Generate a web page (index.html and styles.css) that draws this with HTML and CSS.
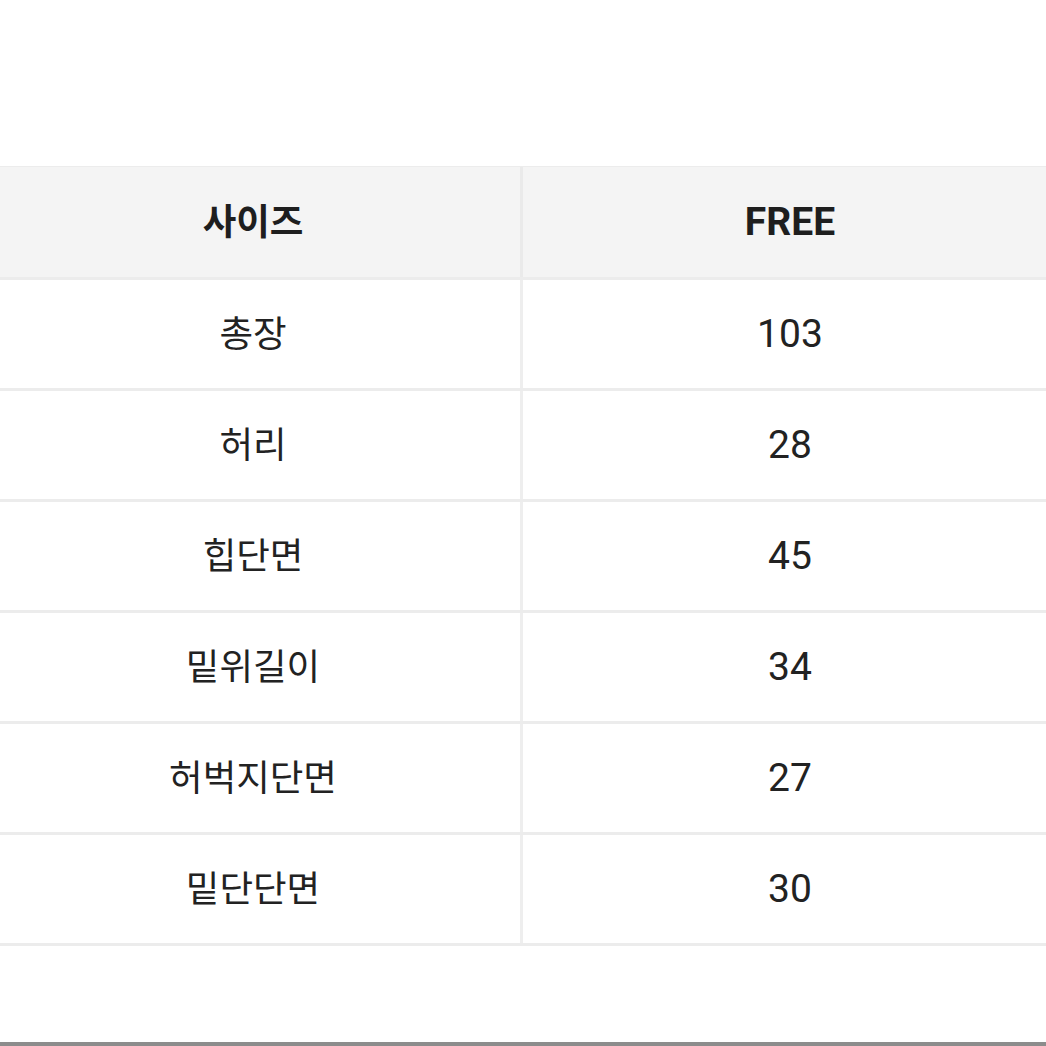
FILE: index.html
```html
<!DOCTYPE html>
<html lang="ko">
<head>
<meta charset="utf-8">
<title>사이즈</title>
<link rel="stylesheet" href="styles.css">
</head>
<body>
<div class="page">
  <div class="size-table">
    <div class="row head">
      <div class="cell label">사이즈</div>
      <div class="cell value latin">FREE</div>
    </div>
    <div class="row">
      <div class="cell label">총장</div>
      <div class="cell value latin">103</div>
    </div>
    <div class="row">
      <div class="cell label">허리</div>
      <div class="cell value latin">28</div>
    </div>
    <div class="row">
      <div class="cell label">힙단면</div>
      <div class="cell value latin">45</div>
    </div>
    <div class="row">
      <div class="cell label">밑위길이</div>
      <div class="cell value latin">34</div>
    </div>
    <div class="row">
      <div class="cell label">허벅지단면</div>
      <div class="cell value latin">27</div>
    </div>
    <div class="row last">
      <div class="cell label">밑단단면</div>
      <div class="cell value latin">30</div>
    </div>
  </div>
  <div class="bottom-rule"></div>
</div>
</body>
</html>
```
FILE: styles.css
```css
* { box-sizing: border-box; }
html, body {
  margin: 0;
  padding: 0;
  background: #ffffff;
}
body {
  font-family: "Noto Sans CJK KR", "Noto Sans", sans-serif;
  color: #222222;
}
.page {
  width: 1046px;
  height: 1046px;
  padding-top: 166px;
  display: flex;
  flex-direction: column;
  overflow: hidden;
}
.size-table {
  display: flex;
  flex-direction: column;
  width: 1071px;
  margin-left: -14px;
  border-top: 1px solid #ececec;
}
.row {
  display: flex;
  height: 111px;
  border-top: 3px solid #ececec;
}
.row.head {
  height: 110px;
  border-top: none;
  background: #f4f4f4;
}
.row.last {
  height: 114px;
  border-bottom: 3px solid #ececec;
}
.cell {
  display: flex;
  align-items: center;
  justify-content: center;
  font-size: 36.5px;
  line-height: 1;
}
.cell.label {
  width: 537px;
  padding-bottom: 4px;
  border-right: 3px solid #eeeeee;
}
.row.head .cell.label {
  border-right-color: #eaeaea;
}
.cell.value {
  flex: 1;
}
.latin {
  font-family: Roboto, "Noto Sans", sans-serif;
  font-size: 39px;
}
.row.head .cell {
  font-weight: 700;
  color: #1e1e1e;
}
.row.head .latin {
  font-size: 39px;
}
.bottom-rule {
  margin-top: auto;
  height: 4px;
  background: #8c8c8c;
}
```
